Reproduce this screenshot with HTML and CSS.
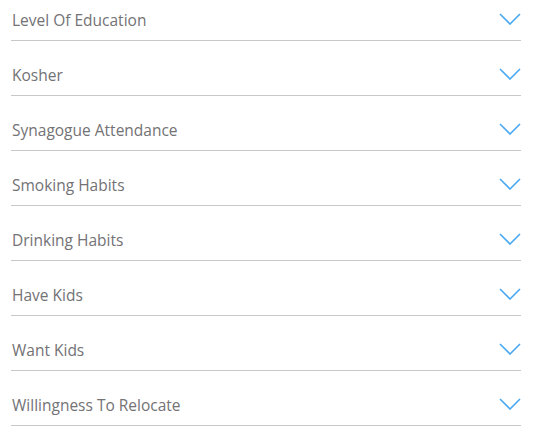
FILE: index.html
```html
<!DOCTYPE html>
<html>
<head>
    <meta charset="utf-8">
    <title>Preferences</title>
    <link rel="stylesheet" href="styles.css">
</head>
<body>
<div class="filters">
    <div class="row"><span class="label">Level Of Education</span><svg class="chev" viewBox="0 0 22 12"><path d="M1 1L11 11L21 1"/></svg></div>
    <div class="row"><span class="label">Kosher</span><svg class="chev" viewBox="0 0 22 12"><path d="M1 1L11 11L21 1"/></svg></div>
    <div class="row"><span class="label">Synagogue Attendance</span><svg class="chev" viewBox="0 0 22 12"><path d="M1 1L11 11L21 1"/></svg></div>
    <div class="row"><span class="label">Smoking Habits</span><svg class="chev" viewBox="0 0 22 12"><path d="M1 1L11 11L21 1"/></svg></div>
    <div class="row"><span class="label">Drinking Habits</span><svg class="chev" viewBox="0 0 22 12"><path d="M1 1L11 11L21 1"/></svg></div>
    <div class="row"><span class="label">Have Kids</span><svg class="chev" viewBox="0 0 22 12"><path d="M1 1L11 11L21 1"/></svg></div>
    <div class="row"><span class="label">Want Kids</span><svg class="chev" viewBox="0 0 22 12"><path d="M1 1L11 11L21 1"/></svg></div>
    <div class="row"><span class="label">Willingness To Relocate</span><svg class="chev" viewBox="0 0 22 12"><path d="M1 1L11 11L21 1"/></svg></div>
</div>
</body>
</html>
```
FILE: styles.css
```css
*{margin:0;padding:0;box-sizing:border-box;}
body{background:#fff;font-family:"Open Sans",Lato,sans-serif;}
.filters{width:510px;margin-left:11px;}
.row{display:flex;align-items:center;justify-content:space-between;padding:23px 0 9px 1px;border-bottom:1px solid #c8c8c8;}
.row:first-child{padding-top:9px;}
.label{font-size:15.5px;line-height:22px;color:#737275;}
.chev{width:22px;height:12px;fill:none;stroke:#48a8f2;stroke-width:1.6;margin-top:-2px;}
```
